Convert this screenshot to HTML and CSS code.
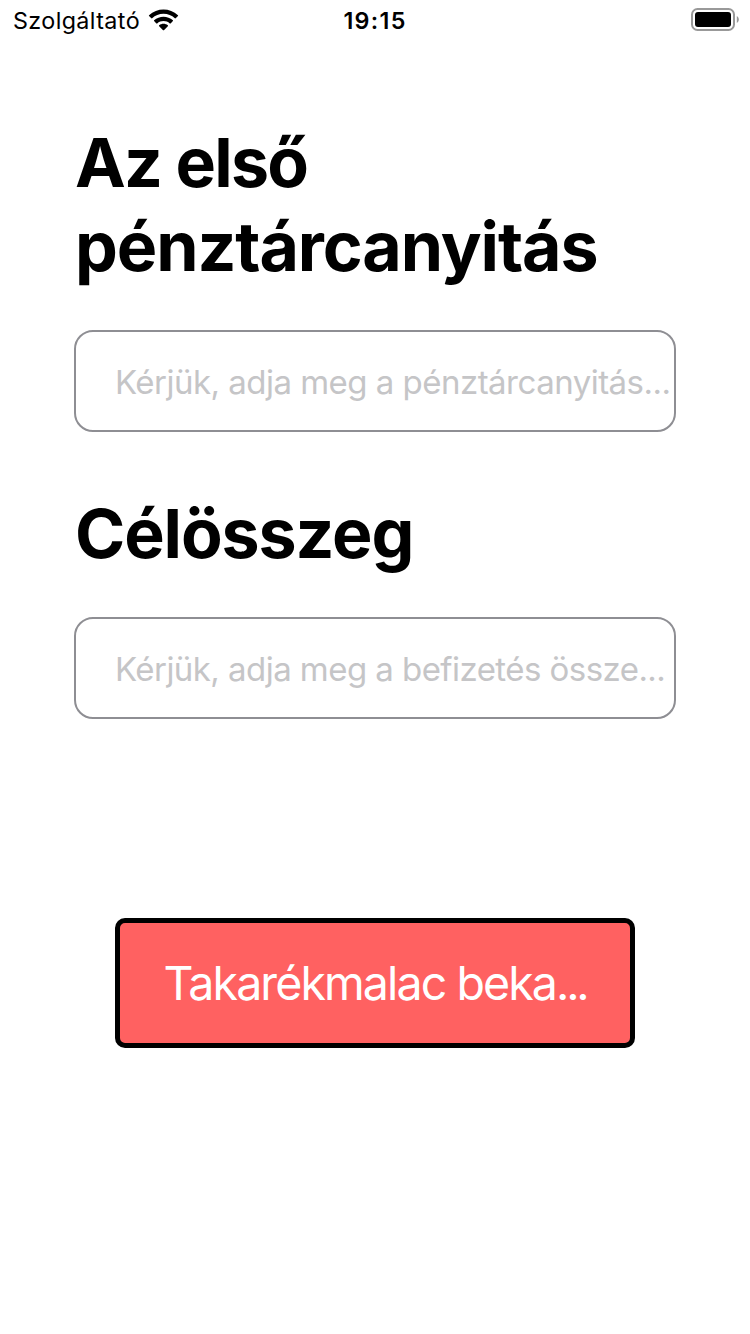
FILE: index.html
```html
<!DOCTYPE html>
<html lang="hu">
<head>
<meta charset="utf-8">
<title>Takarékmalac</title>
<link rel="stylesheet" href="styles.css">
</head>
<body>
<header class="status">
  <div class="carrier">
    <span class="carrier-name">Szolgáltató</span>
    <svg class="wifi" width="31" height="23" viewBox="0 0 30 22">
      <path d="M15 4.4C19.2 4.4 23.1 6 26 8.8C26.25 9 26.6 9 26.8 8.8L29 6.6C29.2 6.35 29.2 6 29 5.8C21.2-1.6 8.8-1.6 1 5.8C.8 6 .8 6.35 1 6.6L3.2 8.8C3.4 9 3.75 9 4 8.8C6.9 6 10.8 4.4 15 4.4Z"/>
      <path d="M15 11.5C17.3 11.5 19.4 12.3 21.1 13.8C21.35 14 21.7 14 21.9 13.8L24.1 11.6C24.3 11.35 24.3 11 24.1 10.8C19 6.1 11 6.1 5.9 10.8C5.7 11 5.7 11.35 5.9 11.6L8.1 13.8C8.3 14 8.65 14 8.9 13.8C10.6 12.3 12.7 11.5 15 11.5Z"/>
      <path d="M19.2 16.5C19.45 16.3 19.45 15.95 19.2 15.7C16.8 13.7 13.2 13.7 10.8 15.7C10.55 15.95 10.55 16.3 10.8 16.5L14.6 20.4C14.8 20.6 15.2 20.6 15.4 20.4Z"/>
    </svg>
  </div>
  <time class="clock">19:15</time>
  <svg class="battery" width="48" height="24" viewBox="0 0 48 24">
    <rect class="battery-shell" x="1" y="1" width="42" height="21" rx="5.5"/>
    <rect x="4" y="4" width="36" height="15" rx="3"/>
    <path class="battery-cap" d="M45.8 8C47.2 8.7 47.8 10 47.8 11.5S47.2 14.3 45.8 15Z"/>
  </svg>
</header>
<main class="form">
  <h1 class="title"><span class="title-first">Az első</span><br><span class="title-second">pénztárcanyitás</span></h1>
  <div class="field"><span class="hint-opening">Kérjük, adja meg a pénztárcanyitás...</span></div>
  <h1 class="title title-goal">Célösszeg</h1>
  <div class="field"><span class="hint-deposit">Kérjük, adja meg a befizetés össze...</span></div>
  <button class="submit" type="button"><span class="submit-label">Takarékmalac beka<span class="submit-dots">...</span></span></button>
</main>
</body>
</html>
```
FILE: styles.css
```css
body {
  margin: 0;
  background: #fff;
  color: #000;
  font-family: Inter, "Liberation Sans", sans-serif;
}

.status {
  display: grid;
  grid-template-columns: 1fr auto 1fr;
  height: 40px;
  align-items: center;
  padding: 0 11px 0 13px;
  font-size: 23.3px;
}

.carrier {
  display: flex;
  align-items: center;
  gap: 8px;
}

.carrier-name {
  letter-spacing: 0.4px;
}

.wifi {
  margin-top: 1px;
}

.clock {
  padding-right: 2px;
  font-weight: 600;
  letter-spacing: 1.3px;
}

.battery {
  justify-self: end;
  overflow: visible;
}

.battery-shell {
  fill: none;
  stroke: #999;
  stroke-width: 2;
}

.battery-cap {
  fill: #999;
}

.form {
  display: flex;
  flex-direction: column;
  padding: 80px 74px 0;
}

.title {
  margin: 0 0 42px;
  padding-left: 1px;
  font-size: 68px;
  font-weight: 700;
  letter-spacing: -1.1px;
  line-height: 84px;
  white-space: nowrap;
}

.title-first {
  letter-spacing: -1.75px;
}

.title-goal {
  margin-top: 59px;
}

.field {
  display: flex;
  align-items: center;
  box-sizing: border-box;
  height: 102px;
  padding: 2px 0 0 39px;
  border: 2px solid #8e8e93;
  border-radius: 19px;
  color: #c5c5c7;
  font-size: 33px;
  white-space: nowrap;
}

.hint-opening {
  letter-spacing: -0.52px;
}

.hint-deposit {
  letter-spacing: -0.55px;
}

.submit {
  align-self: center;
  box-sizing: border-box;
  width: 520px;
  height: 130px;
  margin-top: 199px;
  padding: 0;
  border: 5px solid #000;
  border-radius: 10px;
  background: #ff6161;
  color: #fff;
  font-family: inherit;
  font-size: 46.5px;
  white-space: nowrap;
}

.submit-label {
  letter-spacing: -1.9px;
}

.submit-dots {
  letter-spacing: -3.3px;
}
```
